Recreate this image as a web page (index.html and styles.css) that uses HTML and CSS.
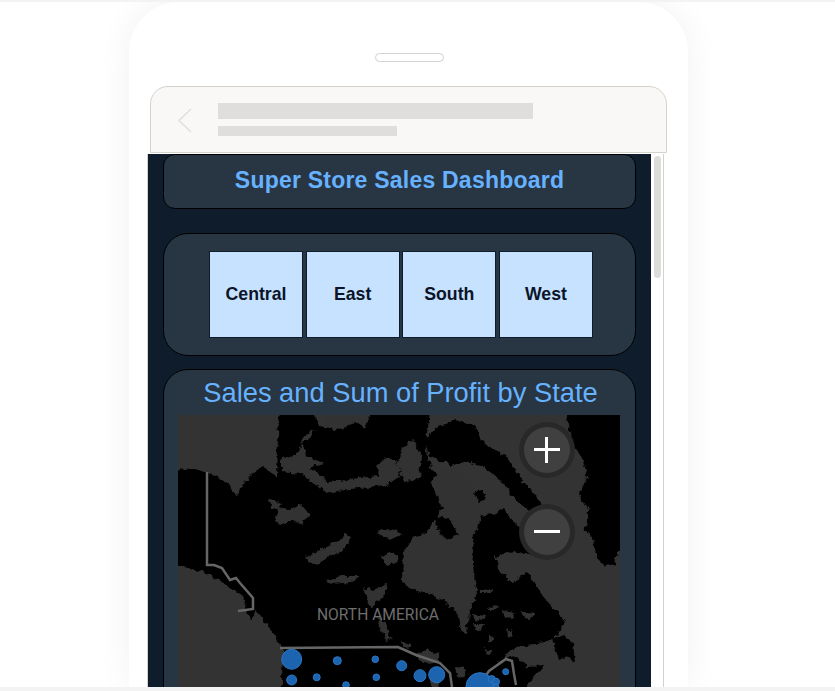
FILE: index.html
```html
<!DOCTYPE html>
<html lang="en">
<head>
    <meta charset="UTF-8">
    <meta name="viewport" content="width=device-width, initial-scale=1.0">
    <title>Super Store Sales Dashboard</title>
    <link rel="stylesheet" href="styles.css">
</head>
<body>

<div class="strip strip-top"></div>

<div class="stage">
    <div class="phone">
        <div class="speaker"></div>

        <!-- Browser bar -->
        <div class="browser-bar">
            <svg class="back-icon" width="14" height="25" viewBox="0 0 14 25">
                <polyline points="13,1 1,12.5 13,24" fill="none" stroke="#e0dedc" stroke-width="1.5"/>
            </svg>
            <div class="address">
                <div class="address-line"></div>
                <div class="address-sub"></div>
            </div>
        </div>

        <div class="screen">
            <div class="report">
                <div class="card title-card">
                    <h1>Super Store Sales Dashboard</h1>
                </div>

                <!-- Region slicer -->
                <div class="card slicer-card">
                    <div class="slicer">
                        <button>Central</button>
                        <button>East</button>
                        <button>South</button>
                        <button>West</button>
                    </div>
                </div>

                <!-- Map -->
                <div class="card map-card">
                    <h2>Sales and Sum of Profit by State</h2>
                    <div class="map">
                        <svg class="map-svg" width="442" height="272" viewBox="0 0 442 272">
                            <defs>
                                <!-- roughens the coastlines -->
                                <filter id="coast" x="-5%" y="-5%" width="110%" height="110%">
                                    <feTurbulence type="fractalNoise" baseFrequency="0.16" numOctaves="3" seed="7"/>
                                    <feDisplacementMap in="SourceGraphic" scale="7" xChannelSelector="R" yChannelSelector="G"/>
                                    <feGaussianBlur stdDeviation="0.4"/>
                                </filter>
                            </defs>

                            <rect width="442" height="272" fill="#333"/>

                            <g filter="url(#coast)" transform="translate(3 1)">
                                <!-- Land -->
                                <g fill="#000">
                                    <polygon points="-15,52 15,53 28,58 40,62 50,70 56,80 62,68 72,58 82,50 90,56 96,60 98,-15 130,-15 138,10 160,14 172,4 185,12 193,-15 250,-15 245,30 250,52 296,100 312,98 322,92 335,108 352,118 358,136 346,138 326,136 314,140 318,155 332,166 346,156 361,179 384,206 378,216 371,223 354,229 334,231 318,246 335,240 345,250 364,249 348,266 338,290 100,290 102,233 99,228 92,216 85,208 75,195 70,205 62,180 40,165 20,155 -15,147"/>
                                    <polygon points="384,-15 460,-15 460,122 436,136 434,148 424,150 414,140 412,122 404,115 408,96 398,78 407,60 400,40 392,30 388,15"/>
                                    <polygon points="255,12 275,3 295,10 300,25 325,40 338,60 355,80 365,95 355,100 335,85 320,65 300,50 285,45 270,50 250,40 243,25"/>
                                    <polygon points="371,222 384,219 392,228 394,246 386,241 378,244 374,232"/>
                                </g>

                                <!-- Water over land -->
                                <g fill="#333">
                                    <polygon points="100,42 116,38 122,20 136,14 120,28 125,38 143,48 128,52 150,66 170,63 198,60 196,48 205,42 216,46 219,60 205,69 170,73 145,77 135,68 120,58 100,56"/>
                                    <polygon points="140,-15 186,-15 176,6 160,9 146,10"/>
                                    <polygon points="222,32 232,24 240,40 238,62 224,66 216,50"/>
                                    <polygon points="221,166 231,173 248,179 264,186 276,196 279,213 286,219 288,196 296,179 293,159 291,136 292,118 300,104 298,85 290,65 275,55 258,52 250,70 262,92 256,102 244,118 232,122 222,135"/>
                                    <polygon points="97,92 108,94 120,88 128,98 122,108 112,104 100,110 94,102"/>
                                    <polygon points="87,82 100,88 96,94 90,90"/>
                                    <polygon points="125,140 140,134 156,126 164,118 170,122 162,134 150,140 136,148 128,146"/>
                                    <polygon points="145,164 162,160 179,160 170,166 152,168"/>
                                    <polygon points="184,172 192,175 206,168 202,182 190,192 186,186"/>
                                    <polygon points="196,200 203,205 210,222 206,226 200,214"/>
                                    <polygon points="196,116 210,114 222,118 214,122 202,121"/>
                                    <polygon points="200,140 212,136 218,146 206,150"/>
                                    <polygon points="291,198 304,200 302,205 292,204"/>
                                    <polygon points="321,194 334,196 332,203 323,202"/>
                                    <polygon points="341,195 354,197 350,203 343,202"/>
                                    <polygon points="298,174 313,173 310,178 300,178"/>
                                    <polygon points="306,191 319,190 316,194 308,194"/>
                                    <polygon points="293,208 302,208 300,214 295,213"/>
                                    <polygon points="308,218 313,220 311,226 308,224"/>
                                    <polygon points="326,212 332,216 330,221 327,220"/>
                                    <polygon points="304,233 311,234 309,239 305,238"/>
                                    <polygon points="234,238 246,234 258,238 258,246 246,248 238,244"/>
                                    <polygon points="221,226 231,228 228,232 222,231"/>
                                    <polygon points="274,251 284,252 284,260 276,262"/>
                                    <polygon points="250,263 258,264 258,275 250,275"/>
                                </g>

                                <!-- Islands in the bay -->
                                <g fill="#000">
                                    <polygon points="294,75 302,74 304,84 297,86"/>
                                    <polygon points="254,100 268,102 278,118 266,124 256,112"/>
                                </g>
                            </g>

                            <!-- Borders -->
                            <polyline class="border" points="29,57 29,150 36,150 44,153 52,165 58,163 62,168 75,183 75,194 60,196"/>
                            <polyline class="border" points="102,233 220,232 238,240 262,248 272,258 274,272"/>
                            <polyline class="border" points="300,272 311,256 328,244 334,246 336,259 338,270"/>

                            <text class="map-label" x="139" y="205">NORTH AMERICA</text>

                            <!-- Sales by state -->
                            <g fill="#1c64b0" stroke="#2a78c8" stroke-width="1">
                                <circle cx="113.7" cy="244.3" r="10"/>
                                <circle cx="159.3" cy="245.7" r="4"/>
                                <circle cx="197.3" cy="244.3" r="3.3"/>
                                <circle cx="223.7" cy="250.7" r="5"/>
                                <circle cx="242" cy="260.7" r="6"/>
                                <circle cx="258.7" cy="259.7" r="8"/>
                                <circle cx="113.7" cy="265" r="5"/>
                                <circle cx="138.7" cy="262.3" r="3.5"/>
                                <circle cx="198.3" cy="262.3" r="3.3"/>
                                <circle cx="168" cy="270" r="3.3"/>
                                <circle cx="302" cy="271.7" r="14"/>
                                <circle cx="313.7" cy="264" r="3.5"/>
                                <circle cx="318" cy="266.7" r="3.5"/>
                                <circle cx="327.7" cy="256.7" r="3"/>
                                <circle cx="318" cy="272" r="3"/>
                            </g>
                        </svg>

                        <button class="zoom-btn zoom-in"><span class="bar-h"></span><span class="bar-v"></span></button>
                        <button class="zoom-btn zoom-out"><span class="bar-h"></span></button>
                    </div>
                </div>
            </div>

            <div class="scrollbar">
                <div class="scroll-thumb"></div>
            </div>
        </div>
    </div>
</div>

<div class="strip strip-bottom"></div>

</body>
</html>
```

FILE: styles.css
```css
html, body {
    height: 691px;
    margin: 0;
    padding: 0;
    overflow: hidden;
}

body {
    font-family: "Liberation Sans", Arial, sans-serif;
    background-color: #fff;
    display: flex;
    flex-direction: column;
}

.strip {
    background-color: #f3f3f3;
    position: relative;
    z-index: 1;
}

.strip-top {
    height: 2px;
}

.strip-bottom {
    height: 4px;
}

.stage {
    height: 685px;
    padding-left: 129px;
}

/* Phone */
.phone {
    width: 559px;
    height: 685px;
    background-color: #fff;
    border-radius: 50px 50px 0 0;
    box-shadow: 0 0 35px rgba(0, 0, 0, 0.06);
    overflow: hidden;
    box-sizing: border-box;
    padding-top: 51px;
}

.speaker {
    width: 69px;
    height: 9px;
    margin-left: 246px;
    box-sizing: border-box;
    border: 1px solid #d5d1cd;
    border-radius: 5px;
}

.browser-bar {
    width: 517px;
    height: 67px;
    margin: 24px 0 0 21px;
    box-sizing: border-box;
    background-color: #f9f8f6;
    border: 1px solid #d5d1cd;
    border-radius: 18px 18px 0 0;
    display: flex;
    align-items: flex-start;
}

.back-icon {
    margin: 21px 0 0 27px;
}

.address {
    margin: 16px 0 0 26px;
}

.address-line {
    width: 315px;
    height: 16px;
    background-color: #e0dedc;
}

.address-sub {
    width: 179px;
    height: 10px;
    margin-top: 7px;
    background-color: #e0dedc;
}

.screen {
    width: 517px;
    height: 540px;
    margin: 1px 0 0 18px;
    box-sizing: border-box;
    border-left: 1px solid #d5d1cd;
    border-right: 1px solid #d5d1cd;
    display: flex;
}

.report {
    width: 503px;
    box-sizing: border-box;
    padding: 0 15px;
    background-color: #0f1c2c;
}

.scrollbar {
    flex: 1;
    padding: 2px 3px;
}

.scroll-thumb {
    width: 7px;
    height: 122px;
    background-color: #dedcda;
    border-radius: 4px;
}

/* Cards */
.card {
    box-sizing: border-box;
    background-color: #283543;
    border: 1px solid #000;
}

.title-card {
    height: 55px;
    border-radius: 12px;
    text-align: center;
}

h1 {
    margin: 0;
    font-size: 23px;
    line-height: 50px;
    color: #66b2ff;
    letter-spacing: 0.22px;
}

.slicer-card {
    height: 123px;
    margin-top: 24px;
    border-radius: 25px;
    padding: 17px 0 0 45px;
}

.slicer {
    display: flex;
    gap: 2.67px;
}

.slicer button {
    width: 94px;
    height: 87px;
    box-sizing: border-box;
    padding: 0;
    background-color: #c7e2ff;
    border: 1px solid #0f1c2c;
    color: #0b1428;
    font-family: inherit;
    font-size: 17.7px;
    font-weight: bold;
}

.map-card {
    height: 400px;
    margin-top: 13px;
    border-radius: 25px 25px 0 0;
    padding: 0 15px 0 14px;
}

h2 {
    margin: 0;
    height: 45px;
    padding-left: 3px;
    font-size: 27.3px;
    font-weight: normal;
    line-height: 45px;
    text-align: center;
    color: #66b2ff;
}

/* Map */
.map {
    position: relative;
    width: 442px;
    height: 272px;
}

.map-svg {
    display: block;
}

.map-label {
    font-family: Roboto, sans-serif;
    font-size: 15.6px;
    fill: #6e6e6e;
}

.border {
    fill: none;
    stroke: #666;
    stroke-width: 2.5;
}

.zoom-btn {
    position: absolute;
    left: 346px;
    width: 46px;
    height: 46px;
    padding: 0;
    box-sizing: content-box;
    background-color: #404040;
    border: 0;
    border-radius: 50%;
    box-shadow: 0 0 0 5px #282828;
}

.zoom-in {
    top: 12px;
}

.zoom-out {
    top: 94px;
}

.bar-h, .bar-v {
    position: absolute;
    background-color: #fff;
}

.bar-h {
    left: 10px;
    top: 21px;
    width: 26px;
    height: 3px;
}

.bar-v {
    left: 21px;
    top: 10px;
    width: 3px;
    height: 26px;
}
```
